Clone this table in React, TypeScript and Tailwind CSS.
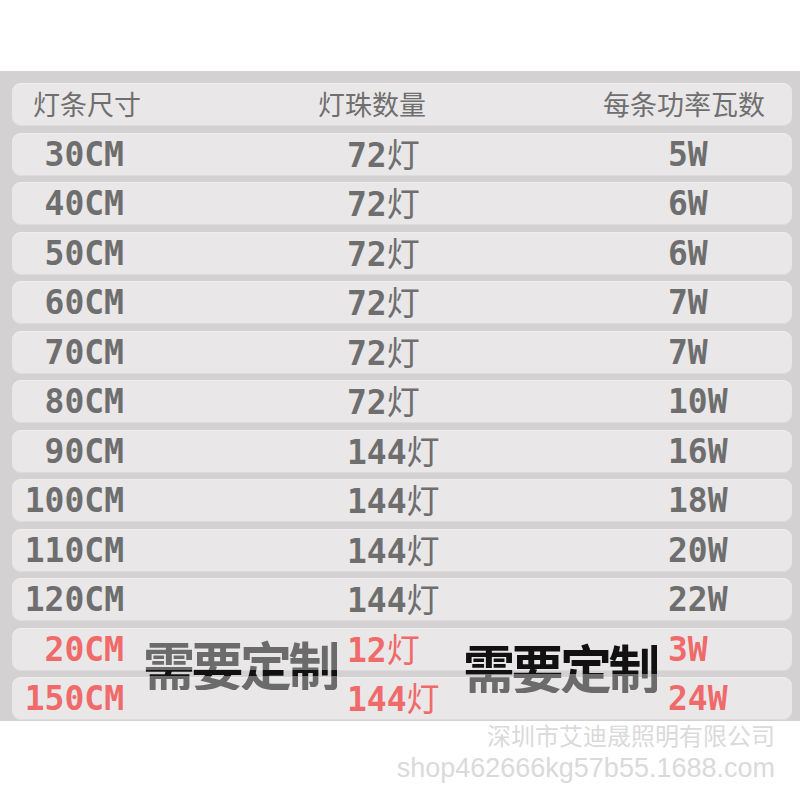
import React from "react";

type Row = { size: string; beads: string; watt: string; red?: boolean };

const rows: Row[] = [
  { size: "30CM", beads: "72", watt: "5W" },
  { size: "40CM", beads: "72", watt: "6W" },
  { size: "50CM", beads: "72", watt: "6W" },
  { size: "60CM", beads: "72", watt: "7W" },
  { size: "70CM", beads: "72", watt: "7W" },
  { size: "80CM", beads: "72", watt: "10W" },
  { size: "90CM", beads: "144", watt: "16W" },
  { size: "100CM", beads: "144", watt: "18W" },
  { size: "110CM", beads: "144", watt: "20W" },
  { size: "120CM", beads: "144", watt: "22W" },
  { size: "20CM", beads: "12", watt: "3W", red: true },
  { size: "150CM", beads: "144", watt: "24W", red: true },
];

const cjk = "font-['Noto_Sans_CJK_SC',sans-serif]";
const mono = "font-['DejaVu_Sans_Mono','Noto_Sans_CJK_SC',monospace] font-bold";
const rowBox = "h-[43px] rounded-[9px] bg-[#e9e7e8] shadow-[inset_0_-1px_0_#dddbdc,inset_0_1px_0_#efeeee]";

export default function App() {
  return (
    <div className="w-[800px] h-[800px] bg-white overflow-hidden">
      <div className="h-[71px]" />
      <div className="relative bg-[#d3d1d2] pt-[12px] pb-[1px] pl-[12px] pr-[8px] flex flex-col gap-[6.5px]">
        <div className={`${rowBox} grid grid-cols-[306px_285px_1fr] items-center text-[27px] text-[#6f6f6f] ${cjk}`}>
          <span className="pl-[21px]">灯条尺寸</span>
          <span>灯珠数量</span>
          <span>每条功率瓦数</span>
        </div>
        {rows.map((r) => (
          <div
            key={r.size + r.watt}
            className={`${rowBox} grid grid-cols-[112px_223px_321px_1fr] items-center text-[33px] leading-none ${r.red ? "text-[#f06a6a]" : "text-[#6e6e6e]"}`}
          >
            <span className={`${mono} text-right`}>{r.size}</span>
            <span />
            <span>
              <span className={mono}>{r.beads}</span>
              <span className={cjk}>灯</span>
            </span>
            <span className={mono}>{r.watt}</span>
          </div>
        ))}

        {/* stamped-over label, half hidden under the rows */}
        <span className={`absolute left-[143px] top-[566.5px] text-[52px] tracking-[-3.5px] leading-none font-bold ${cjk} bg-[linear-gradient(to_bottom,#6b6b6b_32.5px,#111_32.5px,#111_38.5px,#6b6b6b_38.5px)] bg-clip-text text-transparent`}>
          需要定制
        </span>
        <span className={`absolute left-[463px] top-[569.5px] text-[52px] tracking-[-3.5px] leading-none font-bold ${cjk} bg-[linear-gradient(to_bottom,#111_33.5px,#6b6b6b_33.5px)] bg-clip-text text-transparent`}>
          需要定制
        </span>
      </div>

      <div className="flex flex-col items-end pr-[25px] text-[#dadada]">
        <span className={`text-[24px] leading-none mt-[2px] ${cjk}`}>深圳市艾迪晟照明有限公司</span>
        <span className="text-[27px] leading-none mt-[8px] font-['Liberation_Sans',sans-serif]">shop462666kg57b55.1688.com</span>
      </div>
    </div>
  );
}
